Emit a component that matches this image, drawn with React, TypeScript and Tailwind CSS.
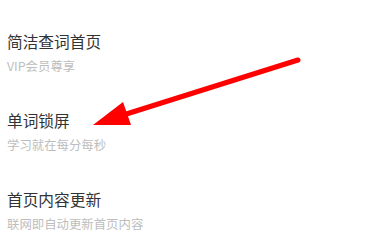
const items = [
  { title: "简洁查词首页", sub: "VIP会员尊享" },
  { title: "单词锁屏", sub: "学习就在每分每秒" },
  { title: "首页内容更新", sub: "联网即自动更新首页内容" },
];

const font = {
  fontFamily: '"Noto Sans CJK SC", "Noto Sans", sans-serif',
};

export default function App() {
  return (
    <div className="relative w-[375px] h-[249px] bg-white overflow-hidden" style={font}>
      <div className="flex flex-col gap-[36px] pt-[31px] px-[7px]">
        {items.map((item) => (
          <div key={item.title} className="flex flex-col gap-[6px]">
            <div className="text-[15.7px] leading-[21px] text-[#333333]">{item.title}</div>
            <div className="text-[12.4px] leading-[16px] text-[#bdbdbd]">{item.sub}</div>
          </div>
        ))}
      </div>

      {/* red annotation arrow */}
      <svg className="absolute left-0 top-0" width="375" height="249" viewBox="0 0 375 249">
        <line x1="298" y1="60" x2="120" y2="116" stroke="#ff0000" strokeWidth="5" strokeLinecap="round" />
        <polygon points="93,125 123,102 131,125" fill="#ff0000" />
      </svg>
    </div>
  );
}
